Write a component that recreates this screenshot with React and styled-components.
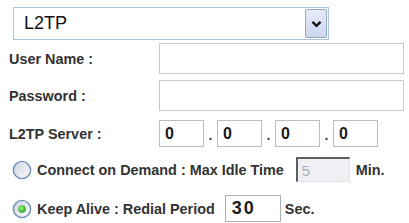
import styled, { createGlobalStyle } from "styled-components"

const GlobalStyle = createGlobalStyle`
  html, body {
    margin: 0;
    padding: 0;
    background: #ffffff;
  }
  body {
    font-family: "Liberation Sans", Arial, sans-serif;
    color: #1a1a1a;
  }
`

const Form = styled.div`
  width: 409px;
  height: 223px;
  box-sizing: border-box;
  padding: 7px 0 0 9px;
  display: flex;
  flex-direction: column;
  overflow: hidden;
`

const Select = styled.div`
  margin-left: 4px;
  width: 316px;
  height: 33px;
  box-sizing: border-box;
  border: 1px solid #a9c6da;
  display: flex;
  align-items: center;
  justify-content: space-between;
  padding: 1px;
`

const SelectValue = styled.span`
  font-size: 18px;
  padding-left: 9px;
  color: #111;
`

const DropButton = styled.div`
  width: 22px;
  height: 29px;
  box-sizing: border-box;
  border: 1px solid #98a8c8;
  border-radius: 2px;
  background: linear-gradient(#e6ebf8, #cdd5ee);
  display: flex;
  align-items: center;
  justify-content: center;
`

const Row = styled.div`
  display: flex;
  align-items: center;
  height: ${(p) => p.$h}px;
  margin-top: ${(p) => p.$mt}px;
`

const Label = styled.span`
  width: 150px;
  flex: none;
  font-size: 14.4px;
  font-weight: bold;
  color: #333;
`

const TextInput = styled.div`
  width: 245px;
  height: 100%;
  box-sizing: border-box;
  border: 1px solid #c4c9cc;
  background: #fff;
`

const OctetBox = styled.div`
  width: 45px;
  height: 100%;
  box-sizing: border-box;
  border: 1px solid #b9bfc1;
  font-size: 16px;
  font-weight: bold;
  padding-left: 5px;
  display: flex;
  align-items: center;
  color: #1a1a1a;
`

const Dot = styled.span`
  width: 13px;
  text-align: center;
  font-size: 14px;
  font-weight: bold;
  align-self: flex-end;
  padding-bottom: 4px;
  color: #444;
`

const RadioRow = styled.div`
  display: flex;
  align-items: center;
  height: ${(p) => p.$h}px;
  margin-top: ${(p) => p.$mt}px;
  margin-left: 3px;
`

const RadioText = styled.span`
  font-size: 14.4px;
  font-weight: bold;
  margin-left: 5px;
  color: #333;
  white-space: nowrap;
`

const IdleInput = styled.div`
  width: 54px;
  height: 100%;
  box-sizing: border-box;
  margin-left: 12px;
  border-top: 2px solid #5a5e62;
  border-left: 2px solid #5a5e62;
  border-right: 1px solid #dfe2e6;
  border-bottom: 1px solid #dfe2e6;
  background: #eef0f4;
  color: #a9b1bd;
  font-size: 15px;
  padding-left: 4px;
  display: flex;
  align-items: center;
`

const RedialInput = styled.div`
  width: 56px;
  height: 100%;
  box-sizing: border-box;
  margin-left: 10px;
  border: 1px solid #a9b0b0;
  font-size: 18px;
  font-weight: bold;
  letter-spacing: 2px;
  padding-left: 6px;
  display: flex;
  align-items: center;
  color: #1a1a1a;
`

const Unit = styled.span`
  font-size: 14.4px;
  font-weight: bold;
  margin-left: ${(p) => p.$ml}px;
  color: #333;
`

const Radio = ({ checked }) => (
  <svg width="20" height="20" viewBox="0 0 20 20">
    <defs>
      <linearGradient id={checked ? "rg1" : "rg0"} x1="0" y1="0" x2="1" y2="1">
        <stop offset="0" stopColor="#c9d3df" />
        <stop offset="1" stopColor="#ffffff" />
      </linearGradient>
      <radialGradient id="gd" cx="0.4" cy="0.4" r="0.6">
        <stop offset="0" stopColor="#9cf57f" />
        <stop offset="1" stopColor="#21a21b" />
      </radialGradient>
    </defs>
    <circle cx="10" cy="10" r="8.6" fill={`url(#${checked ? "rg1" : "rg0"})`} stroke="#6d8fb5" strokeWidth="1.4" />
    {checked && <circle cx="10" cy="10" r="3.8" fill="url(#gd)" />}
  </svg>
)

const Chevron = () => (
  <svg width="11" height="8" viewBox="0 0 11 8">
    <path d="M1.5 1.8 L5.5 5.8 L9.5 1.8" fill="none" stroke="#111" strokeWidth="2.4" />
  </svg>
)

export default function App() {
  return (
    <>
      <GlobalStyle />
      <Form>
        <Select>
          <SelectValue>L2TP</SelectValue>
          <DropButton>
            <Chevron />
          </DropButton>
        </Select>

        <Row $h={31} $mt={3}>
          <Label>User Name :</Label>
          <TextInput />
        </Row>

        <Row $h={31} $mt={6}>
          <Label>Password :</Label>
          <TextInput />
        </Row>

        <Row $h={27} $mt={9}>
          <Label>L2TP Server :</Label>
          <OctetBox>0</OctetBox>
          <Dot>.</Dot>
          <OctetBox>0</OctetBox>
          <Dot>.</Dot>
          <OctetBox>0</OctetBox>
          <Dot>.</Dot>
          <OctetBox>0</OctetBox>
        </Row>

        <RadioRow $h={25} $mt={10}>
          <Radio />
          <RadioText>Connect on Demand : Max Idle Time</RadioText>
          <IdleInput>5</IdleInput>
          <Unit $ml={6}>Min.</Unit>
        </RadioRow>

        <RadioRow $h={27} $mt={13}>
          <Radio checked />
          <RadioText>Keep Alive : Redial Period</RadioText>
          <RedialInput>30</RedialInput>
          <Unit $ml={4}>Sec.</Unit>
        </RadioRow>
      </Form>
    </>
  )
}
